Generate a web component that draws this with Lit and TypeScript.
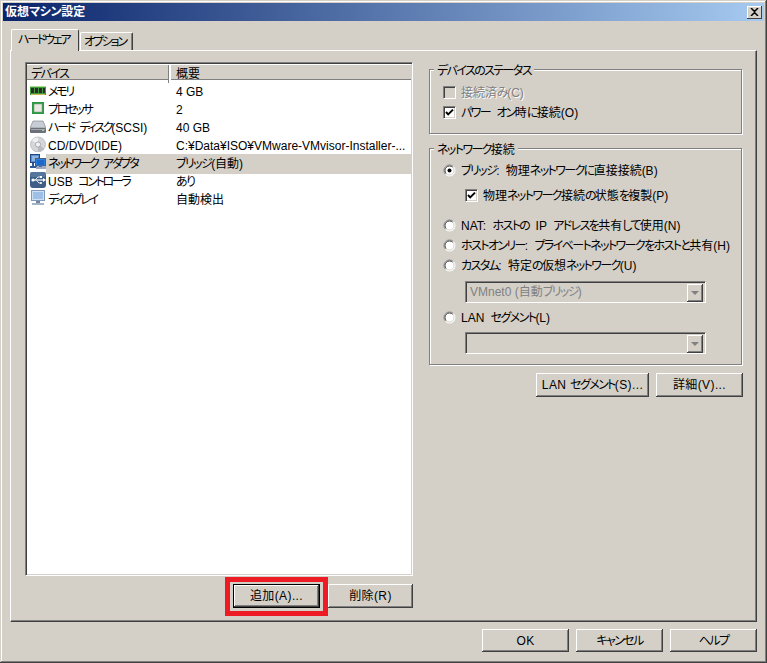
import { LitElement, html, css, svg, TemplateResult } from "lit";
import { customElement } from "lit/decorators.js";

/* Kana in the reference are narrow (MS UI Gothic), so kana runs get their own tightened span. */
const t = (s: string) =>
  s.split(/([\u3040-\u30FF]+)/).map((p, i) => (i % 2 ? html`<span class="k">${p}</span>` : p));

const icons: Record<string, TemplateResult> = {
  mem: svg`<rect x="0" y="4" width="16" height="9" fill="#3f9a3a"/><rect x="0" y="4" width="16" height="1" fill="#a6dc8c"/><rect x="1" y="6" width="3" height="5" fill="#2b2b2b"/><rect x="5" y="6" width="3" height="5" fill="#2b2b2b"/><rect x="9" y="6" width="3" height="5" fill="#2b2b2b"/><rect x="13" y="6" width="2" height="5" fill="#2b2b2b"/><rect x="1" y="12" width="14" height="1" fill="#c9b84a"/>`,
  cpu: svg`<rect x="2" y="2" width="12" height="12" fill="#27993f"/><rect x="4" y="4" width="8" height="8" fill="#e8e8e0" stroke="#8c9c8c" stroke-width=".6"/>`,
  hdd: svg`<path d="M3 3h10l3 7H0z" fill="#c8ccd4" stroke="#777b84" stroke-width=".6"/><rect x="0" y="10" width="16" height="5" rx="1" fill="#6c7078"/><rect x="1" y="11" width="14" height="1" fill="#a4a8b0"/><rect x="12" y="12" width="2" height="1" fill="#8fe08f"/>`,
  cd: svg`<circle cx="8" cy="8.500" r="7.500" fill="#d4d6da" stroke="#b0b2b8" stroke-width=".7"/><path d="M8 8.500L2 4.500A7 7 0 0 1 8 1.500z" fill="#eef0f2"/><path d="M8 8.500l6 4a7 7 0 0 1-6 3z" fill="#b8bac0"/><circle cx="8" cy="8.500" r="2.600" fill="#f2f2f2" stroke="#909298" stroke-width=".7"/>`,
  net: svg`<rect x="0.500" y="0.500" width="9" height="8" fill="#5f8fc8" stroke="#1f4a8a"/><rect x="2" y="2" width="6" height="5" fill="#8fb4e0"/><rect x="2" y="9" width="2" height="4" fill="#2f5a94"/><rect x="0" y="12" width="7" height="2" fill="#2f5a94"/><rect x="5.500" y="4.500" width="10" height="7.500" fill="#2b7fe0" stroke="#4a5f80"/><rect x="7" y="6" width="7" height="5" fill="#1f68c8"/><rect x="9" y="12" width="3" height="1" fill="#5a6e8c"/><rect x="6" y="13" width="10" height="2" fill="#9aaac0"/>`,
  usb: svg`<rect x="0" y="0" width="16" height="16" rx="3" fill="#3f5f86"/><rect x="0" y="0" width="16" height="5" rx="2" fill="#56769c"/><path d="M2 8h11" stroke="#fff" stroke-width="1.200"/><path d="M13 6l3 2-3 2z" fill="#fff"/><path d="M5 8l3-3h2M6 8l3 3h2" stroke="#dfe7f0" fill="none"/><rect x="10" y="4" width="2" height="2" fill="#fff"/><circle cx="11" cy="11" r="1" fill="#fff"/><circle cx="3" cy="8" r="1.600" fill="#fff"/>`,
  disp: svg`<rect x="1" y="0" width="14" height="11" fill="#8099b8"/><rect x="2" y="1" width="12" height="9" fill="#cfe0f2"/><rect x="3" y="2" width="10" height="7" fill="#9fc0e6"/><rect x="6" y="11" width="4" height="2" fill="#6f86a4"/><rect x="2" y="13" width="12" height="2" fill="#a4b4c8"/>`,
};

const rows = [
  ["mem", "メモリ", "4 GB"],
  ["cpu", "プロセッサ", "2"],
  ["hdd", "ハード ディスク(SCSI)", "40 GB"],
  ["cd", "CD/DVD(IDE)", "C:¥Data¥ISO¥VMware-VMvisor-Installer-..."],
  ["net", "ネットワーク アダプタ", "ブリッジ(自動)"],
  ["usb", "USB コントローラ", "あり"],
  ["disp", "ディスプレイ", "自動検出"],
];

const SELECTED = 4;

@customElement("app-root")
export class AppRoot extends LitElement {
  static styles = css`
    :host {
      display: block;
      width: 767px;
      height: 663px;
      background: #d4d0c8;
      font: 12px/16px "Liberation Sans", "Noto Sans CJK JP", sans-serif;
      color: #000;
      overflow: hidden;
    }
    .k { font-feature-settings: "palt"; letter-spacing: -1.6px; }
    .dialog {
      box-sizing: border-box;
      width: 767px;
      height: 663px;
      padding: 3px 3px 0;
      box-shadow: inset -1px -1px 0 #404040, inset 1px 1px 0 #d4d0c8, inset -2px -2px 0 #808080, inset 2px 2px 0 #fff;
    }
    .title {
      height: 18px;
      width: 761px;
      background: linear-gradient(90deg, #0a246a, #a6caf0);
      color: #fff;
      font-weight: bold;
      font-size: 12px;
      line-height: 17px;
      padding-left: 2px;
      box-sizing: border-box;
      display: flex;
      justify-content: space-between;
      align-items: center;
    }
    .title .k { letter-spacing: -0.3px; }
    .close {
      width: 15px;
      height: 13px;
      margin-right: 2px;
      background: #d4d0c8;
      box-shadow: inset -1px -1px 0 #404040, inset 1px 1px 0 #fff;
      display: flex;
      align-items: center;
      justify-content: center;
    }
    .tabs {
      display: flex;
      align-items: flex-end;
      height: 21px;
      margin: 8px 0 0 7px;
      position: relative;
    }
    .tab {
      box-sizing: border-box;
      border-left: 1px solid #fff;
      border-top: 1px solid #fff;
      border-right: 1px solid #404040;
      border-radius: 2px 2px 0 0;
    }
    .tab .k { letter-spacing: -2.2px; }
    .tab.on { width: 68px; height: 22px; margin-left: 1px; padding-left: 6px; line-height: 20px; position: relative; z-index: 1; background: #d4d0c8; margin-bottom: -1px; }
    .tab.off { width: 53px; height: 18px; margin-left: 1px; padding-left: 3px; line-height: 18px; box-shadow: inset -1px 0 0 #808080; }
    .panel {
      box-sizing: border-box;
      width: 747px;
      height: 572px;
      margin-left: 7px;
      border-left: 1px solid #fff;
      border-top: 1px solid #fff;
      border-right: 1px solid #404040;
      border-bottom: 1px solid #404040;
      box-shadow: inset -1px -1px 0 #808080;
      padding: 11px 13px 0 14px;
      display: grid;
      grid-template-columns: 388px 314px;
      column-gap: 16px;
      align-content: start;
    }
    .left { display: flex; flex-direction: column; }
    .list {
      box-sizing: border-box;
      height: 514px;
      background: #fff;
      border-left: 1px solid #808080;
      border-top: 1px solid #808080;
      border-right: 1px solid #fff;
      border-bottom: 1px solid #fff;
      box-shadow: inset 1px 1px 0 #404040, inset -1px -1px 0 #d4d0c8;
      padding: 2px 1px 0 1px;
    }
    .head {
      display: grid;
      grid-template-columns: 144px 1fr;
      height: 15px;
      background: #d4d0c8;
      box-shadow: inset 0 -1px 0 #808080;
      margin-bottom: 2px;
      line-height: 18px;
    }
    .head div:first-child { padding-left: 4px; box-shadow: inset -2px 0 0 #fff, inset -3px 0 0 #808080; }
    .head div:last-child { padding-left: 5px; }
    .row { display: grid; grid-template-columns: 19px 123px 1fr; height: 18px; line-height: 20px; white-space: nowrap; }
    .row svg { width: 16px; height: 16px; margin: 0 0 0 3px; display: block; }
    .name { padding-left: 2px; word-spacing: 2px; }
    .name .k { letter-spacing: -2.3px; }
    .sum { padding-left: 7px; overflow: hidden; }
    .row.sel .name, .row.sel .sum { background: #d4d0c8; }
    .actions { display: flex; justify-content: flex-end; gap: 8px; margin-top: 8px; }
    .hl { position: relative; display: flex; }
    .hl::after {
      content: "";
      position: absolute;
      inset: -7px -8px -8px -8px;
      border: 5px solid #ed1c24;
      pointer-events: none;
    }
    button {
      font: inherit;
      color: #000;
      box-sizing: border-box;
      width: 87px;
      height: 24px;
      padding: 0;
      border: 0;
      letter-spacing: 0.4px;
      background: #d4d0c8;
      box-shadow: inset -1px -1px 0 #404040, inset 1px 1px 0 #fff, inset -2px -2px 0 #808080;
    }
    button.w85 { width: 85px; }
    button.w113 { width: 113px; }
    button.h23 { height: 23px; }
    button.def { border: 1px solid #000; }
    .right { padding-top: 7px; display: flex; flex-direction: column; }
    .group {
      position: relative;
      box-sizing: border-box;
      width: 313px;
      border: 1px solid #808080;
      box-shadow: 1px 1px 0 #fff, inset 1px 1px 0 #fff;
    }
    .g1 { height: 65px; padding: 12px 0 0 13px; }
    .g2 { height: 217px; padding: 11px 0 0 13px; margin-top: 14px; }
    .legend {
      position: absolute;
      left: 4px;
      top: -7px;
      background: #d4d0c8;
      padding: 0 3px;
      white-space: nowrap;
    }
    .opt { display: flex; align-items: center; height: 20px; gap: 5px; white-space: nowrap; word-spacing: 3px; }
    .opt > span:last-child { padding-top: 1px; }
    .opt.in { margin-left: 22px; margin-top: 5px; }
    .opt.gap { margin-top: 10px; }
    .opt.gap4 { margin-top: 4px; }
    .opt.dis { color: #808080; text-shadow: 1px 1px 0 #fff; }
    .box {
      box-sizing: border-box;
      width: 13px;
      height: 13px;
      background: #fff;
      border-left: 1px solid #808080;
      border-top: 1px solid #808080;
      border-right: 1px solid #fff;
      border-bottom: 1px solid #fff;
      box-shadow: inset 1px 1px 0 #404040, inset -1px -1px 0 #d4d0c8;
      flex: none;
    }
    .box.dis { background: #d4d0c8; }
    .box svg { display: block; width: 11px; height: 11px; }
    .radio { width: 13px; height: 13px; flex: none; display: block; }
    .combo {
      box-sizing: border-box;
      width: 241px;
      height: 22px;
      margin: 6px 0 0 22px;
      border-left: 1px solid #808080;
      border-top: 1px solid #808080;
      border-right: 1px solid #fff;
      border-bottom: 1px solid #fff;
      box-shadow: inset 1px 1px 0 #404040, inset -1px -1px 0 #d4d0c8;
      display: flex;
      justify-content: space-between;
      padding: 2px;
      color: #808080;
      line-height: 17px;
      text-indent: 2px;
    }
    .combo.c2 { margin-top: 5px; }
    .arrow {
      width: 16px;
      height: 18px;
      background: #d4d0c8;
      box-shadow: inset -1px -1px 0 #404040, inset 1px 1px 0 #fff, inset -2px -2px 0 #808080;
      display: flex;
      align-items: center;
      justify-content: center;
    }
    .arrow i { border: 4px solid transparent; border-top: 4px solid #808080; border-bottom: 0; display: block; }
    .rbtns { display: flex; justify-content: flex-end; gap: 7px; margin-top: 8px; }
    .footer { display: flex; justify-content: flex-end; gap: 7px; margin: 7px 7px 0 0; }
  `;

  private radio(on = false) {
    return html`<svg class="radio" viewBox="0 0 13 13">
      <circle cx="6.5" cy="6.5" r="5.5" fill="#fff"/>
      <path d="M2.6 10.4A5.5 5.5 0 0 1 10.4 2.6" fill="none" stroke="#808080"/>
      <path d="M3.3 9.7A4.5 4.5 0 0 1 9.7 3.3" fill="none" stroke="#404040"/>
      <path d="M2.6 10.4A5.5 5.5 0 0 0 10.4 2.6" fill="none" stroke="#fff"/>
      <path d="M3.3 9.7A4.5 4.5 0 0 0 9.7 3.3" fill="none" stroke="#d4d0c8"/>
      ${on ? svg`<circle cx="6.5" cy="6.5" r="2" fill="#000"/>` : ""}
    </svg>`;
  }

  private check(on: boolean, dis = false) {
    return html`<span class="box ${dis ? "dis" : ""}">
      ${on ? html`<svg viewBox="0 0 11 11"><path d="M2 5l2.2 2.4L9 2.6" fill="none" stroke="#000" stroke-width="2"/></svg>` : ""}
    </span>`;
  }

  render() {
    return html`
      <div class="dialog">
        <div class="title">
          <span>${t("仮想マシン設定")}</span>
          <span class="close"><svg width="9" height="8" viewBox="0 0 9 8"><path d="M1 0l3.500 3.500L8 0M1 8l3.500-3.500L8 8" fill="none" stroke="#000" stroke-width="1.500"/></svg></span>
        </div>
        <div class="tabs">
          <div class="tab on">${t("ハードウェア")}</div>
          <div class="tab off">${t("オプション")}</div>
        </div>
        <div class="panel">
          <div class="left">
            <div class="list">
              <div class="head"><div>${t("デバイス")}</div><div>概要</div></div>
              ${rows.map(
                (r, i) => html`<div class="row ${i === SELECTED ? "sel" : ""}">
                  <svg viewBox="0 0 16 16">${icons[r[0]]}</svg>
                  <div class="name">${t(r[1])}</div>
                  <div class="sum">${t(r[2])}</div>
                </div>`
              )}
            </div>
            <div class="actions">
              <div class="hl"><button class="def">追加(A)...</button></div>
              <button class="w85">削除(R)</button>
            </div>
          </div>
          <div class="right">
            <div class="group g1">
              <div class="legend">${t("デバイスのステータス")}</div>
              <label class="opt dis">${this.check(false, true)}<span>${t("接続済み(C)")}</span></label>
              <label class="opt">${this.check(true)}<span>${t("パワー オン時に接続(O)")}</span></label>
            </div>
            <div class="group g2">
              <div class="legend">${t("ネットワーク接続")}</div>
              <label class="opt">${this.radio(true)}<span>${t("ブリッジ: 物理ネットワークに直接接続(B)")}</span></label>
              <label class="opt in">${this.check(true)}<span>${t("物理ネットワーク接続の状態を複製(P)")}</span></label>
              <label class="opt gap">${this.radio()}<span>${t("NAT: ホストの IP アドレスを共有して使用(N)")}</span></label>
              <label class="opt">${this.radio()}<span>${t("ホストオンリー: プライベートネットワークをホストと共有(H)")}</span></label>
              <label class="opt">${this.radio()}<span>${t("カスタム: 特定の仮想ネットワーク(U)")}</span></label>
              <div class="combo"><span>VMnet0 (${t("自動ブリッジ")})</span><span class="arrow"><i></i></span></div>
              <label class="opt gap4">${this.radio()}<span>LAN ${t("セグメント(L)")}</span></label>
              <div class="combo c2"><span></span><span class="arrow"><i></i></span></div>
            </div>
            <div class="rbtns">
              <button class="w113">LAN ${t("セグメント(S)...")}</button>
              <button>詳細(V)...</button>
            </div>
          </div>
        </div>
        <div class="footer">
          <button class="h23">OK</button>
          <button class="h23">${t("キャンセル")}</button>
          <button class="h23">${t("ヘルプ")}</button>
        </div>
      </div>
    `;
  }
}
